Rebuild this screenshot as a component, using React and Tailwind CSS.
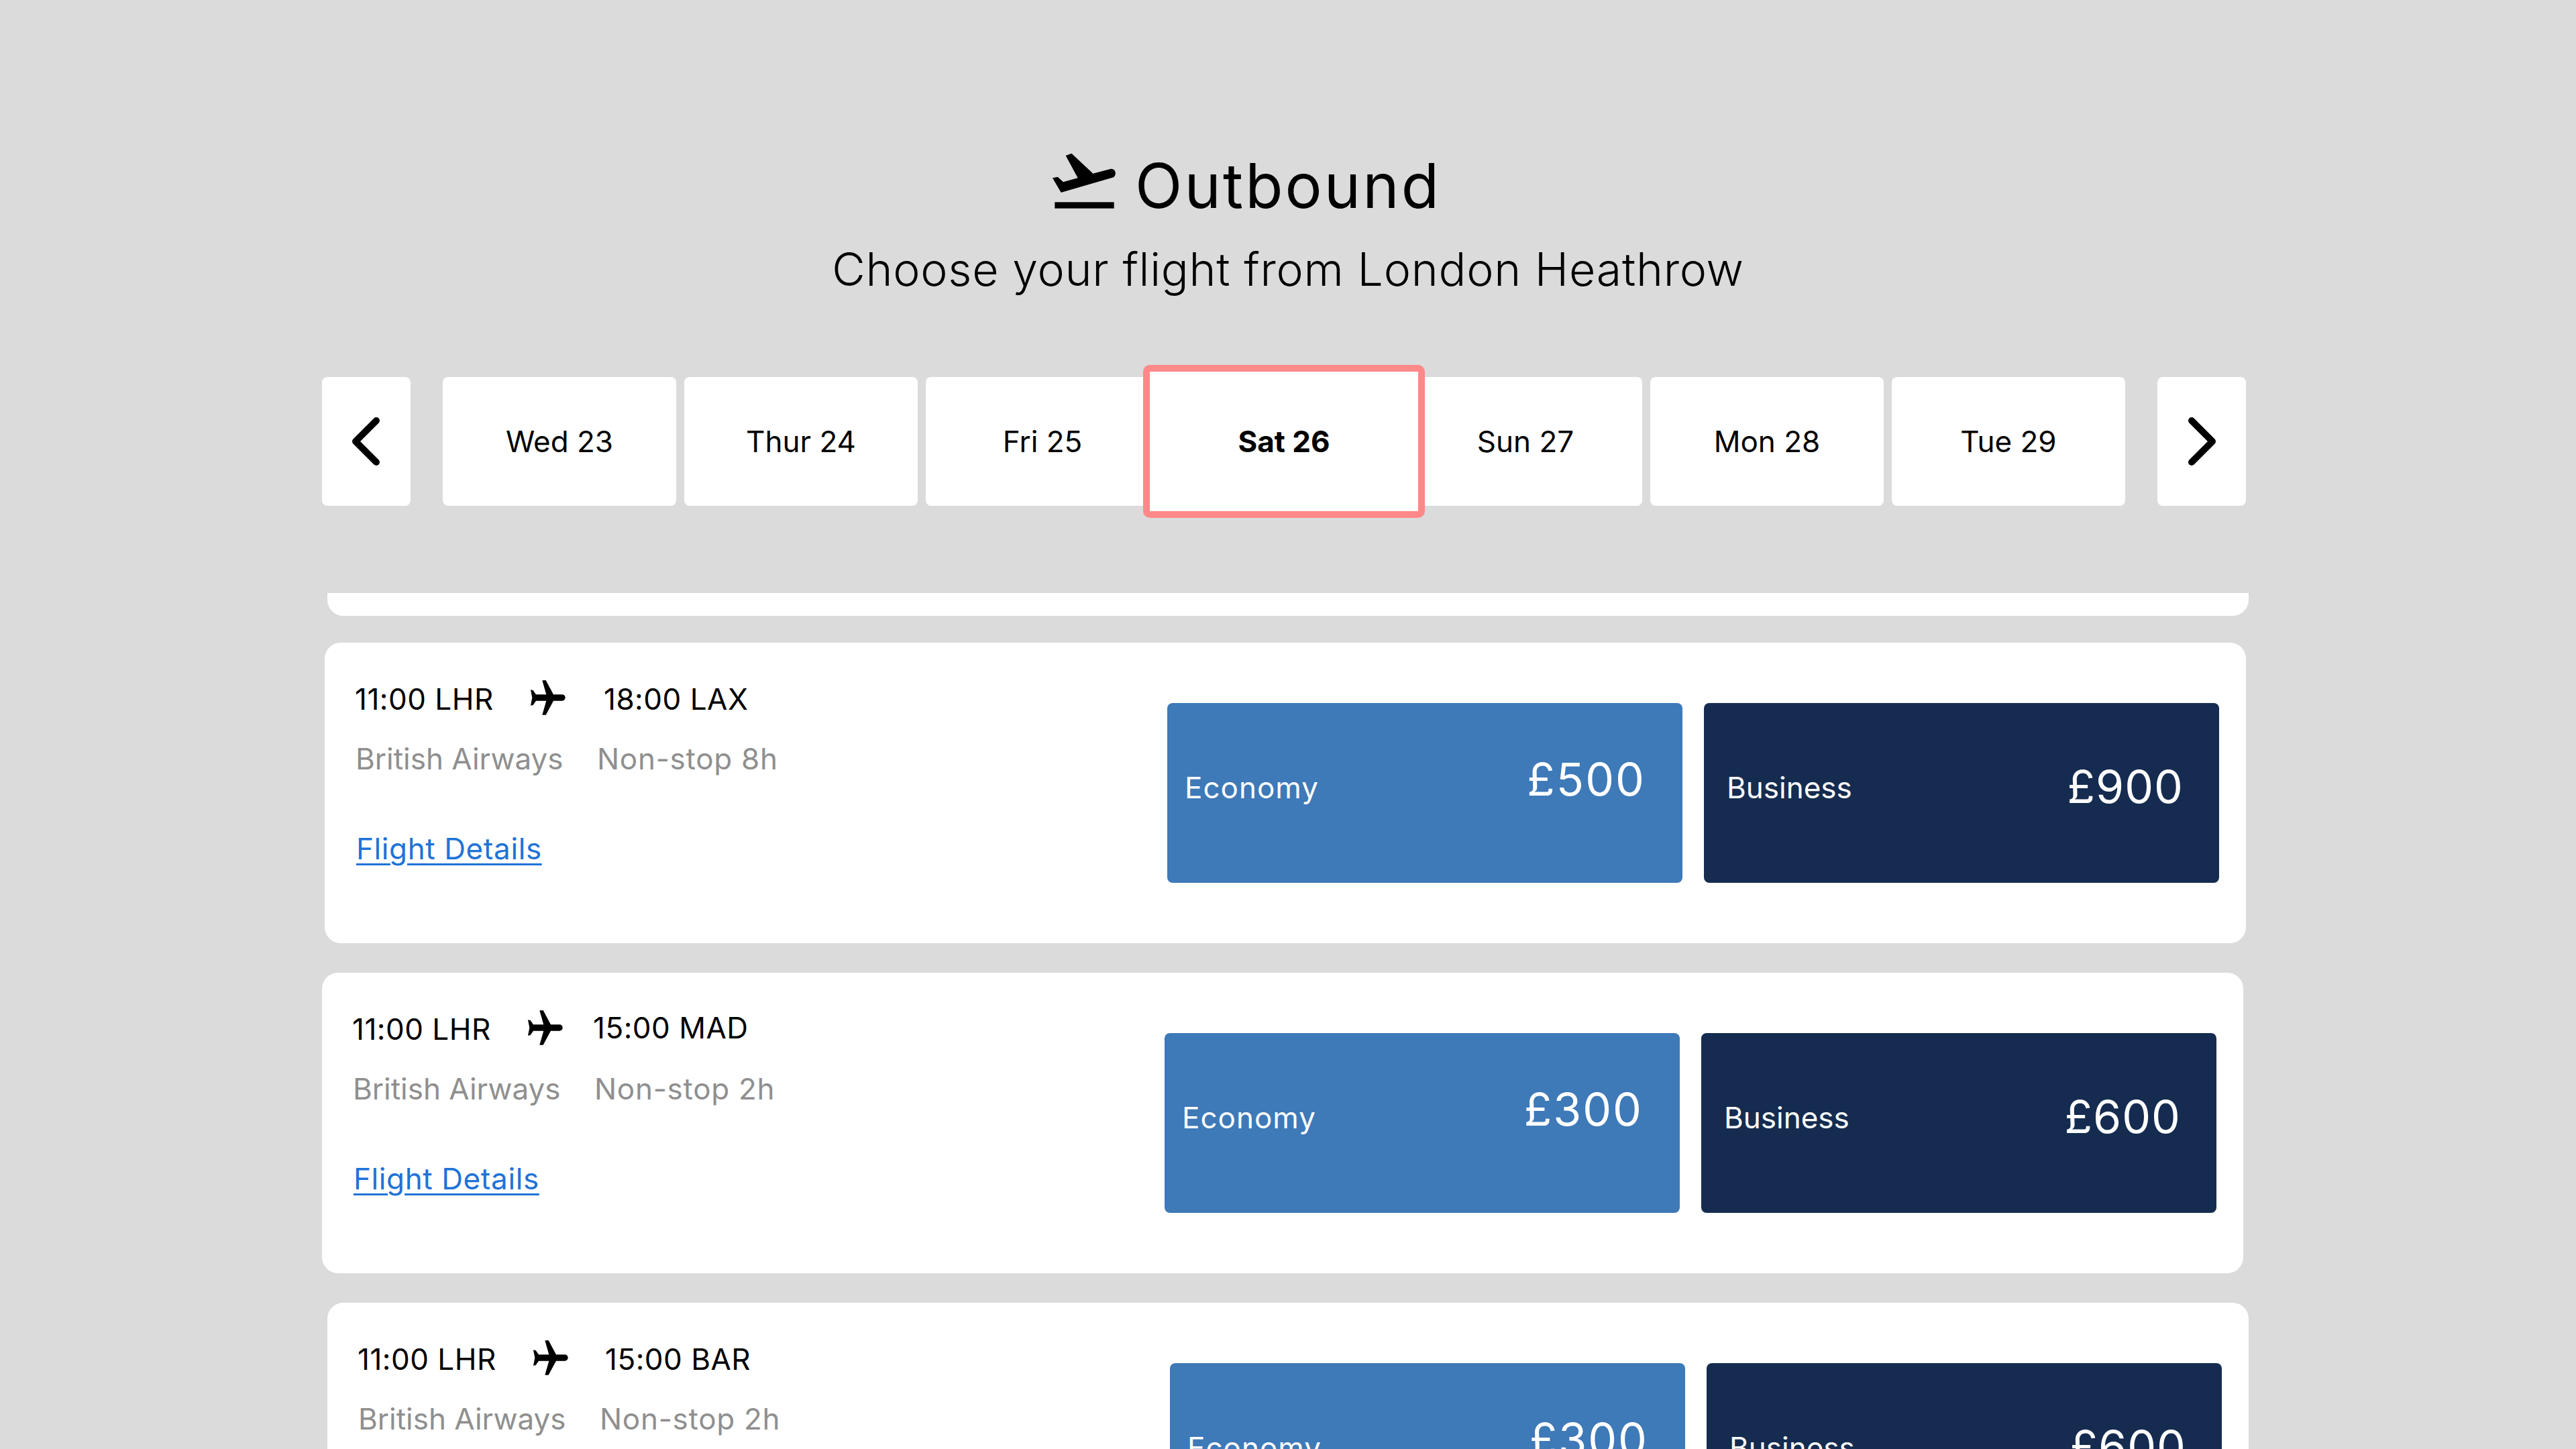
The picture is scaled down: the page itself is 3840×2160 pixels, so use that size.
import React from 'react';

const days = [
  { label: 'Wed 23' },
  { label: 'Thur 24' },
  { label: 'Fri 25' },
  { label: 'Sat 26', active: true },
  { label: 'Sun 27' },
  { label: 'Mon 28' },
  { label: 'Tue 29' },
];

const flights = [
  { id: 1, offset: 'mt-[40px] ml-[484px]', arrive: '18:00 LAX', arriveClass: 'ml-[48px]', duration: 'Non-stop 8h', economy: '£500', business: '£900' },
  { id: 2, offset: 'mt-[44px] ml-[480px]', arrive: '15:00 MAD', arriveClass: 'ml-[36px] mb-[4px]', duration: 'Non-stop 2h', economy: '£300', business: '£600' },
  { id: 3, offset: 'mt-[44px] ml-[488px]', arrive: '15:00 BAR', arriveClass: 'ml-[46px]', duration: 'Non-stop 2h', economy: '£300', business: '£600' },
];

const TakeoffIcon = () => (
  <svg viewBox="0 0 336 288" className="w-[112px] h-[96px] shrink-0" fill="#000">
    <path d="M86 30 L112 20 L208 110 L285 90 C308 86 316 112 300 127 L65 195 L27 130 L50 125 L75 148 L140 130 Z" />
    <rect x="37" y="238" width="265" height="28" />
  </svg>
);

const PlaneIcon = () => (
  <svg viewBox="0 0 216 210" className="w-[72px] h-[70px] shrink-0" fill="#000">
    <path d="M188 105 C188 97 182 91 174 91 L135 91 L101 27 L85 28 L103 91 L57 91 L44 72 L33 70 L40 105 L33 140 L44 138 L57 119 L103 119 L85 182 L101 182 L135 119 L174 119 C182 119 188 113 188 105 Z" />
  </svg>
);

const Chevron = ({ flip }) => (
  <svg viewBox="0 0 72 90" className={flip ? 'w-[72px] h-[90px] -scale-x-100' : 'w-[72px] h-[90px]'} fill="none" stroke="#000" strokeWidth="10" strokeLinecap="round" strokeLinejoin="round">
    <path d="M21 14 L52 45 L21 76" />
  </svg>
);

const FareButton = ({ label, price, color, labelClass, priceClass }) => (
  <div className={`w-[768px] h-[268px] rounded-[8px] flex justify-between items-start text-white ${color}`}>
    <span className={`mt-[96px] text-[44px] leading-[60px] ${labelClass}`}>{label}</span>
    <span className={`text-[68px] leading-[80px] ${priceClass}`}>{price}</span>
  </div>
);

const FlightCard = ({ flight }) => (
  <div className={`w-[2864px] h-[448px] shrink-0 bg-white rounded-[24px] flex ${flight.offset}`}>
    <div className="w-[1256px] shrink-0 flex flex-col">
      <div className="flex items-center mt-[47px] text-[44px] leading-[60px] tracking-[0.5px] text-black">
        <span className="w-[296px] pl-[45px] mt-[3px]">11:00 LHR</span>
        <PlaneIcon />
        <span className={`mt-[3px] ${flight.arriveClass}`}>{flight.arrive}</span>
      </div>
      <div className="flex mt-[26px] text-[44px] leading-[60px] text-[#8f8f8f]">
        <span className="w-[406px] pl-[46px]">British Airways</span>
        <span className="tracking-[0.7px]">{flight.duration}</span>
      </div>
      <a href="#details" className="mt-[74px] ml-[47px] text-[44px] leading-[60px] tracking-[0.6px] text-[#1f73d6] underline decoration-[3px] underline-offset-[6px]">
        Flight Details
      </a>
    </div>
    <div className="flex gap-[32px] pt-[90px]">
      <FareButton label="Economy" price={flight.economy} color="bg-[#3e79b8]" labelClass="ml-[26px] tracking-[1px]" priceClass="mt-[73px] mr-[55px] tracking-[2px]" />
      <FareButton label="Business" price={flight.business} color="bg-[#152c50]" labelClass="ml-[34px]" priceClass="mt-[84px] mr-[53px] tracking-[1px]" />
    </div>
  </div>
);

export default function App() {
  return (
    <div className="w-[3840px] h-[2160px] overflow-hidden bg-[#dbdbdb] flex flex-col items-start text-black font-['Inter',sans-serif]">
      {/* heading */}
      <div className="flex items-start mt-[222px] ml-[1560px]">
        <TakeoffIcon />
        <h1 className="ml-[20px] mt-[5px] text-[92px] leading-[100px] tracking-[3.1px] font-normal">Outbound</h1>
      </div>
      <p className="w-full mt-[34px] text-center text-[68px] leading-[80px] tracking-[0.75px] font-light">Choose your flight from London Heathrow</p>

      {/* date strip */}
      <div className="flex items-center mt-[121px] ml-[480px] h-[192px]">
        <button className="w-[132px] h-[192px] bg-white rounded-[8px] flex items-center justify-center">
          <Chevron flip />
        </button>
        <div className="flex items-center gap-[12px] mx-[48px]">
          {days.map(day => (
            <div
              key={day.label}
              className={day.active
                ? 'relative z-10 w-[420px] h-[228px] -mx-[36px] flex items-center justify-center bg-white border-[10px] border-[#ff8888] rounded-[10px] text-[44px] font-bold'
                : 'w-[348px] h-[192px] bg-white rounded-[8px] flex items-center justify-center text-[44px]'}
            >
              {day.label}
            </div>
          ))}
        </div>
        <button className="w-[132px] h-[192px] bg-white rounded-[8px] flex items-center justify-center">
          <Chevron />
        </button>
      </div>

      {/* bottom of the card scrolled away */}
      <div className="w-[2864px] h-[34px] shrink-0 mt-[130px] ml-[488px] bg-white rounded-b-[24px]" />

      {flights.map(flight => <FlightCard key={flight.id} flight={flight} />)}
    </div>
  );
}
